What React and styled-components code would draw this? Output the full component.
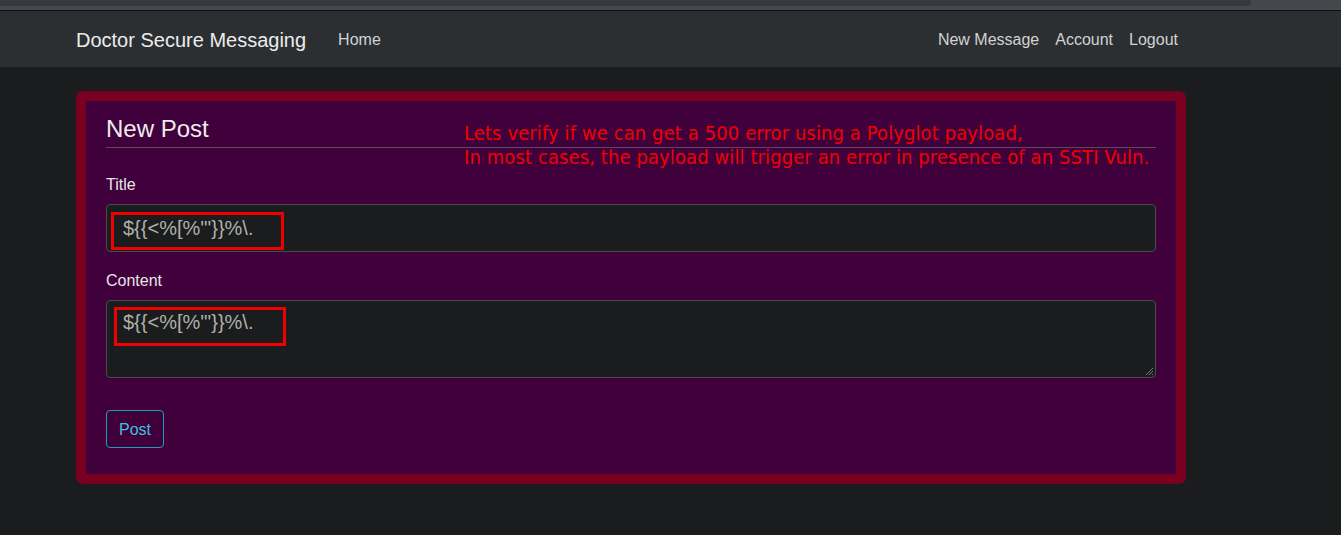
import React from 'react';
import styled, { createGlobalStyle } from 'styled-components';

const Global = createGlobalStyle`
  html, body {
    margin: 0;
    padding: 0;
    background: #1b1c1d;
    font-family: "Liberation Sans", Arial, sans-serif;
    color: #e3e3e3;
  }
`;

const Chrome = styled.div`
  height: 10px;
  background: #45474d;
  border-bottom: 1px solid #0f1011;
  display: flex;
`;

const ScrollThumb = styled.div`
  width: 1251px;
  height: 6px;
  background: #36383d;
  border-bottom-right-radius: 4px;
`;

const Nav = styled.nav`
  box-sizing: border-box;
  height: 56px;
  padding-top: 2px;
  background: #2c2f32;
  display: flex;
  align-items: center;
`;

const NavInner = styled.div`
  margin-left: 76px;
  width: 1102px;
  display: flex;
  align-items: center;
`;

const Brand = styled.a`
  font-size: 20px;
  color: #ececec;
  margin-right: 16px;
`;

const NavLink = styled.a`
  font-size: 16px;
  color: #d2d2d2;
  margin-left: ${({ first }) => (first ? 'auto' : '16px')};
`;

const Main = styled.main`
  margin-left: 76px;
  margin-top: 24px;
  width: 1110px;
`;

const Card = styled.section`
  position: relative;
  box-sizing: border-box;
  background: #3f003b;
  border: 10px solid #790020;
  border-radius: 7px;
  padding: 14px 20px 26px;
`;

const Legend = styled.h2`
  margin: 0 0 24px;
  font-size: 24px;
  font-weight: 400;
  line-height: 27px;
  padding-bottom: 5px;
  color: #ececec;
  border-bottom: 1px solid #5c4a5a;
`;

const Group = styled.div`
  margin-bottom: 16px;
`;

const Label = styled.label`
  display: block;
  font-size: 16px;
  line-height: 24px;
  padding-top: 1px;
  margin-bottom: 7px;
  color: #e6e6e6;
`;

const Field = styled.div`
  position: relative;
  box-sizing: border-box;
  height: ${({ tall }) => (tall ? '78px' : '48px')};
  background: #1b1c1d;
  border: 1px solid #4a4a4e;
  border-radius: 4px;
  padding: ${({ tall }) => (tall ? '9px 16px' : '11px 16px')};
  font-size: 20px;
  line-height: 24px;
  color: #b0b0a8;
`;

const Grip = styled.svg`
  position: absolute;
  right: 1px;
  bottom: 1px;
`;

const Highlight = styled.div`
  position: absolute;
  left: ${({ x }) => x}px;
  top: ${({ y }) => y}px;
  width: ${({ w }) => w}px;
  height: ${({ h }) => h}px;
  box-sizing: border-box;
  border: 3px solid #f00000;
`;

const Button = styled.button`
  margin-top: 16px;
  height: 38px;
  padding: 1px 12px 0;
  background: transparent;
  border: 1px solid #17a2b8;
  border-radius: 4px;
  color: #3ec3dc;
  font-family: "Liberation Sans", Arial, sans-serif;
  font-size: 16px;
`;

const Note = styled.div`
  position: absolute;
  left: 378px;
  top: 20px;
  font-family: "DejaVu Sans Condensed", "DejaVu Sans", sans-serif;
  font-size: 20px;
  line-height: 24px;
  color: #f00000;
  letter-spacing: 0.1px;
`;

export default function App() {
  return (
    <>
      <Global />
      <Chrome>
        <ScrollThumb />
      </Chrome>
      <Nav>
        <NavInner>
          <Brand>Doctor Secure Messaging</Brand>
          <NavLink>Home</NavLink>
          <NavLink first>New Message</NavLink>
          <NavLink>Account</NavLink>
          <NavLink>Logout</NavLink>
        </NavInner>
      </Nav>
      <Main>
        <Card>
          <Legend>New Post</Legend>
          <Note>
            Lets verify if we can get a 500 error using a Polyglot payload,
            <br />
            In most cases, the payload will trigger an error in presence of an SSTI Vuln.
          </Note>
          <Group>
            <Label>Title</Label>
            <Field>
              {'${{<%[%\'"}}%\\.'}
              <Highlight x={4} y={7} w={173} h={38} />
            </Field>
          </Group>
          <Group>
            <Label>Content</Label>
            <Field tall>
              {'${{<%[%\'"}}%\\.'}
              <Highlight x={7} y={6} w={172} h={39} />
              <Grip width="10" height="10" viewBox="0 0 10 10">
                <path d="M9 2L2 9M9 5L5 9M9 8L8 9" stroke="#777" strokeWidth="1" />
              </Grip>
            </Field>
          </Group>
          <Button>Post</Button>
        </Card>
      </Main>
    </>
  );
}
